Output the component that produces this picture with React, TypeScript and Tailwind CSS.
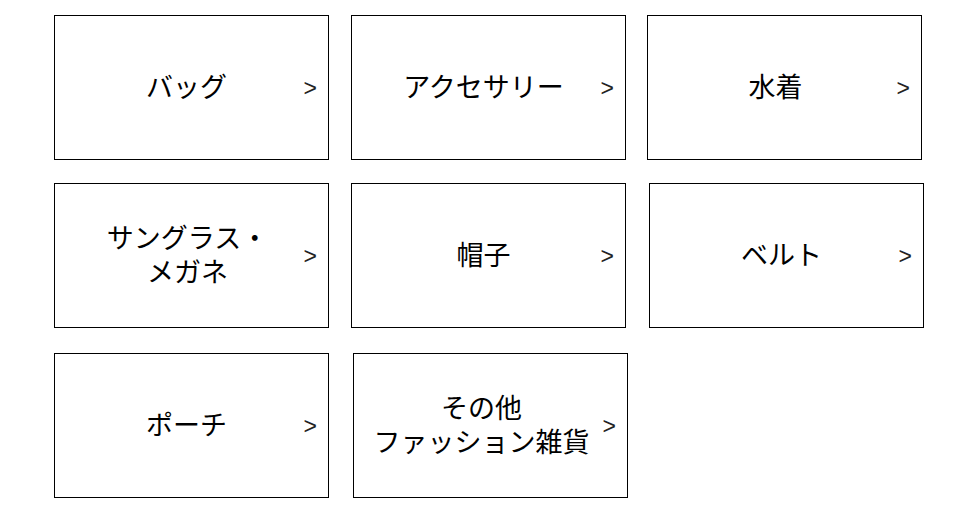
import { Fragment } from 'react'

const rows = [
  [
    { label: ['バッグ'], ml: 'ml-0', pr: 'pr-[10px]' },
    { label: ['アクセサリー'], ml: 'ml-[22px]', pr: 'pr-[10px]' },
    { label: ['水着'], ml: 'ml-[21px]', pr: 'pr-[18px]' },
  ],
  [
    { label: ['サングラス・', 'メガネ'], ml: 'ml-0', pr: 'pr-[8px]' },
    { label: ['帽子'], ml: 'ml-[22px]', pr: 'pr-[10px]' },
    { label: ['ベルト'], ml: 'ml-[23px]', pr: 'pr-[10px]' },
  ],
  [
    { label: ['ポーチ'], ml: 'ml-0', pr: 'pr-[10px]' },
    { label: ['その他', 'ファッション雑貨'], ml: 'ml-[24px]', pr: 'pr-[18px]' },
  ],
]

function Tile({ label, ml, pr }: { label: string[]; ml: string; pr: string }) {
  return (
    <a
      href="#"
      className={`${ml} ${pr} relative flex h-[145px] w-[275px] shrink-0 items-center justify-center border border-black bg-white text-black`}
    >
      <span className="-mt-[3px] text-center text-[27px] font-normal leading-[34px]">
        {label.map((line, i) => (
          <Fragment key={i}>
            {i > 0 && <br />}
            {line}
          </Fragment>
        ))}
      </span>
      <span className="absolute right-[11px] top-1/2 -translate-y-1/2 font-['Liberation_Sans',sans-serif] text-[23px] font-light leading-none text-[#222]">
        &gt;
      </span>
    </a>
  )
}

export default function App() {
  return (
    <div className="min-h-[506px] w-[980px] bg-white pl-[54px] pt-[15px] font-['Noto_Sans_CJK_JP',sans-serif]">
      <div className="flex">
        {rows[0].map((t, i) => <Tile key={i} {...t} />)}
      </div>
      <div className="mt-[23px] flex">
        {rows[1].map((t, i) => <Tile key={i} {...t} />)}
      </div>
      <div className="mt-[25px] flex">
        {rows[2].map((t, i) => <Tile key={i} {...t} />)}
      </div>
    </div>
  )
}
